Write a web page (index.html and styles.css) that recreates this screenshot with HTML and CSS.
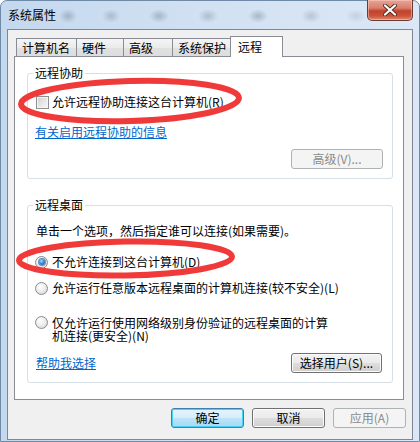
FILE: index.html
```html
<!DOCTYPE html>
<html lang="zh-CN">
<head>
<meta charset="utf-8">
<title>系统属性</title>
<link rel="stylesheet" href="styles.css">
</head>
<body>
<div class="window">
  <div class="titlebar">
    <span class="title">系统属性</span>
    <div class="close">
      <svg width="14" height="12" viewBox="0 0 14 12">
        <path d="M2 1.5 L12 10.5 M12 1.5 L2 10.5" stroke="#5a2a22" stroke-width="4" stroke-linecap="round" fill="none"/>
        <path d="M2 1.5 L12 10.5 M12 1.5 L2 10.5" stroke="#ffffff" stroke-width="2.2" stroke-linecap="round" fill="none"/>
      </svg>
    </div>
  </div>
  <div class="client">
    <div class="tabs">
      <div class="tab tab-w61">计算机名</div>
      <div class="tab tab-w48">硬件</div>
      <div class="tab tab-w50">高级</div>
      <div class="tab tab-w59">系统保护</div>
      <div class="tab tab-sel">远程</div>
    </div>
    <div class="panel">
      <div class="group group-assist">
        <div class="legend">远程协助</div>
        <div class="row row-check">
          <span class="checkbox"></span>
          <span class="label">允许远程协助连接这台计算机(R)</span>
        </div>
        <div class="row row-link1"><span class="link">有关启用远程协助的信息</span></div>
        <div class="btnrow row-adv"><button class="btn btn-disabled btn-adv">高级(V)...</button></div>
      </div>
      <div class="group group-desktop">
        <div class="legend">远程桌面</div>
        <div class="row row-desc">单击一个选项，然后指定谁可以连接(如果需要)。</div>
        <div class="row row-r1">
          <span class="radio"><span class="dot"></span></span>
          <span class="label">不允许连接到这台计算机(D)</span>
        </div>
        <div class="row row-r2">
          <span class="radio"></span>
          <span class="label">允许运行任意版本远程桌面的计算机连接(较不安全)(L)</span>
        </div>
        <div class="row2 row-r3">
          <span class="radio"></span>
          <span class="label label-wrap">仅允许运行使用网络级别身份验证的远程桌面的计算机连接(更安全)(N)</span>
        </div>
        <div class="btnrow row-help">
          <span class="link">帮助我选择</span>
          <button class="btn btn-users">选择用户(S)...</button>
        </div>
      </div>
    </div>
    <div class="actions">
      <button class="btn btn-default btn-w73">确定</button>
      <button class="btn btn-w73">取消</button>
      <button class="btn btn-disabled btn-w73">应用(A)</button>
    </div>
  </div>
</div>
<svg class="annot" width="420" height="442" viewBox="0 0 420 442">
  <ellipse cx="130" cy="101" rx="109" ry="20" transform="rotate(-1.6 130 101)" fill="none" stroke="#f03a3a" stroke-width="6"/>
  <ellipse cx="125.5" cy="258.5" rx="106.5" ry="17" transform="rotate(-1 125.5 258.5)" fill="none" stroke="#f03a3a" stroke-width="6"/>
</svg>
</body>
</html>
```
FILE: styles.css
```css
* { box-sizing: border-box; }
html, body { margin: 0; padding: 0; }
body {
  width: 420px;
  height: 442px;
  position: relative;
  overflow: hidden;
  background: #ffffff;
  font-family: "Noto Sans CJK SC", "Liberation Sans", sans-serif;
  font-size: 12px;
  color: #000;
}
.window {
  width: 420px;
  height: 442px;
  border: 1px solid #6f8aa6;
  border-radius: 7px 7px 0 0;
  padding: 0 6px 1px;
  background:
    radial-gradient(ellipse 9px 7px at 67px 15px, rgba(70,85,100,0.30), transparent),
    radial-gradient(ellipse 9px 7px at 110px 15px, rgba(70,85,100,0.25), transparent),
    radial-gradient(ellipse 10px 7px at 158px 15px, rgba(70,85,100,0.30), transparent),
    radial-gradient(ellipse 10px 7px at 207px 15px, rgba(70,85,100,0.25), transparent),
    radial-gradient(ellipse 10px 7px at 257px 15px, rgba(70,85,100,0.30), transparent),
    radial-gradient(ellipse 10px 7px at 310px 15px, rgba(70,85,100,0.22), transparent),
    radial-gradient(ellipse 10px 7px at 355px 15px, rgba(70,85,100,0.15), transparent),
    linear-gradient(90deg, #c4d8ee 0%, #d3e2f3 55%, #dbe7f5 100%);
}
.titlebar {
  height: 28px;
  display: flex;
  align-items: flex-start;
}
.title {
  padding: 7px 0 0 1px;
  line-height: 14px;
  font-size: 12px;
  color: #000;
}
.close {
  margin-left: auto;
  margin-top: -1px;
  width: 46px;
  height: 21px;
  border: 1px solid #6b3a33;
  border-top: none;
  border-radius: 0 0 5px 5px;
  background: linear-gradient(#e6a597 0%, #d9806c 40%, #c2412b 55%, #c9553b 80%, #e08a6d 100%);
  box-shadow: inset 0 0 0 1px rgba(255,210,200,0.5);
  display: flex;
  align-items: center;
  justify-content: center;
}
.client {
  height: 411px;
  border: 1px solid #7d8894;
  background: #f0f0f0;
}
.tabs {
  display: flex;
  align-items: flex-end;
  height: 18px;
  margin-top: 8px;
  padding-left: 8px;
}
.tab {
  height: 18px;
  line-height: 17px;
  text-align: left;
  padding-left: 5px;
  border: 1px solid #898c95;
  border-bottom: none;
  margin-left: -1px;
  background: linear-gradient(#f5f5f5 0%, #ebebeb 50%, #e1e1e1 51%, #dddddd 100%);
  white-space: nowrap;
}
.tab:first-child { margin-left: 0; }
.tab-w61 { width: 61px; }
.tab-w48 { width: 48px; }
.tab-w50 { width: 50px; }
.tab-w59 { width: 59px; }
.tab-sel {
  width: 53px;
  height: 21px;
  line-height: 20px;
  margin-bottom: -1px;
  background: #ffffff;
  position: relative;
  z-index: 1;
  padding-left: 7px;
}
.panel {
  height: 344px;
  margin: 0 8px 0 6px;
  border: 1px solid #898c95;
  background: #ffffff;
  padding-top: 16px;
}
.group {
  margin: 0 10px 0 12px;
  border: 1px solid #d5dfe5;
  border-radius: 3px;
  padding: 0 9px 9px 8px;
}
.group-desktop { margin-top: 26px; }
.legend {
  display: table;
  margin: -8px 0 0 -3px;
  padding: 0 2px;
  line-height: 14px;
  height: 14px;
  background: #ffffff;
}
.row {
  display: flex;
  align-items: center;
  height: 16px;
  line-height: 16px;
  white-space: nowrap;
}
.row2 {
  display: flex;
  align-items: flex-start;
  line-height: 13px;
}
.row-check { margin-top: 14px; }
.row-link1 { margin-top: 14px; margin-left: -1px; }
.row-adv { margin-top: 9px; justify-content: flex-end; }
.row-desc { margin-top: 11px; }
.row-r1 { margin-top: 15px; }
.row-r2 { margin-top: 10px; }
.row-r3 { margin-top: 20px; }
.row-help { margin-top: 11px; justify-content: space-between; }
.btnrow {
  display: flex;
  align-items: center;
  height: 20px;
}
.label { margin-left: 3px; }
.label-wrap { width: 282px; }
.link {
  color: #0066cc;
  text-decoration: underline;
  line-height: 16px;
}
.checkbox {
  width: 13px;
  height: 13px;
  flex: none;
  border: 1px solid #8e8f8f;
  background: linear-gradient(135deg, #cbcbcb 0%, #e6e6e6 50%, #f8f8f8 100%);
  box-shadow: inset 0 0 0 1px #f4f4f4;
}
.radio {
  width: 13px;
  height: 13px;
  flex: none;
  border-radius: 50%;
  border: 1px solid #8a8c8e;
  background: radial-gradient(circle at 40% 35%, #ffffff 0%, #eeeeee 45%, #cfcfcf 100%);
  display: flex;
  align-items: center;
  justify-content: center;
  margin-left: -1px;
}
.row .radio { margin-right: 1px; }
.row2 .radio { margin-right: 1px; }
.dot {
  width: 6px;
  height: 6px;
  border-radius: 50%;
  background: radial-gradient(circle at 40% 35%, #a9dcff 0%, #3d88d4 45%, #1a4f95 100%);
  box-shadow: 0 0 0 1px #5d8fc4;
}
.btn {
  height: 20px;
  padding: 0;
  margin: 0;
  font-family: "Noto Sans CJK SC", "Liberation Sans", sans-serif;
  font-size: 12px;
  line-height: 18px;
  color: #000;
  border: 1px solid #707070;
  border-radius: 3px;
  background: linear-gradient(#f3f3f3 0%, #ebebeb 48%, #dddddd 52%, #cfcfcf 100%);
  box-shadow: inset 0 0 0 1px #fbfbfb;
  text-align: center;
}
.btn-default {
  border-color: #3c7fb1;
  background: linear-gradient(#e5f4fc 0%, #d6eefb 48%, #bde4f8 52%, #a6d8f4 100%);
  box-shadow: inset 0 0 0 1px #48d0f8;
}
.btn-disabled {
  border-color: #adb2b5;
  background: #f4f4f4;
  box-shadow: none;
  color: #8a8a8a;
}
.btn-adv { width: 92px; }
.btn-users { width: 91px; margin-right: 1px; }
.btn-w73 { width: 73px; }
.actions {
  display: flex;
  justify-content: flex-end;
  gap: 8px;
  margin-top: 8px;
  padding-right: 6px;
}
.annot {
  position: absolute;
  left: 0;
  top: 0;
  pointer-events: none;
}
```
